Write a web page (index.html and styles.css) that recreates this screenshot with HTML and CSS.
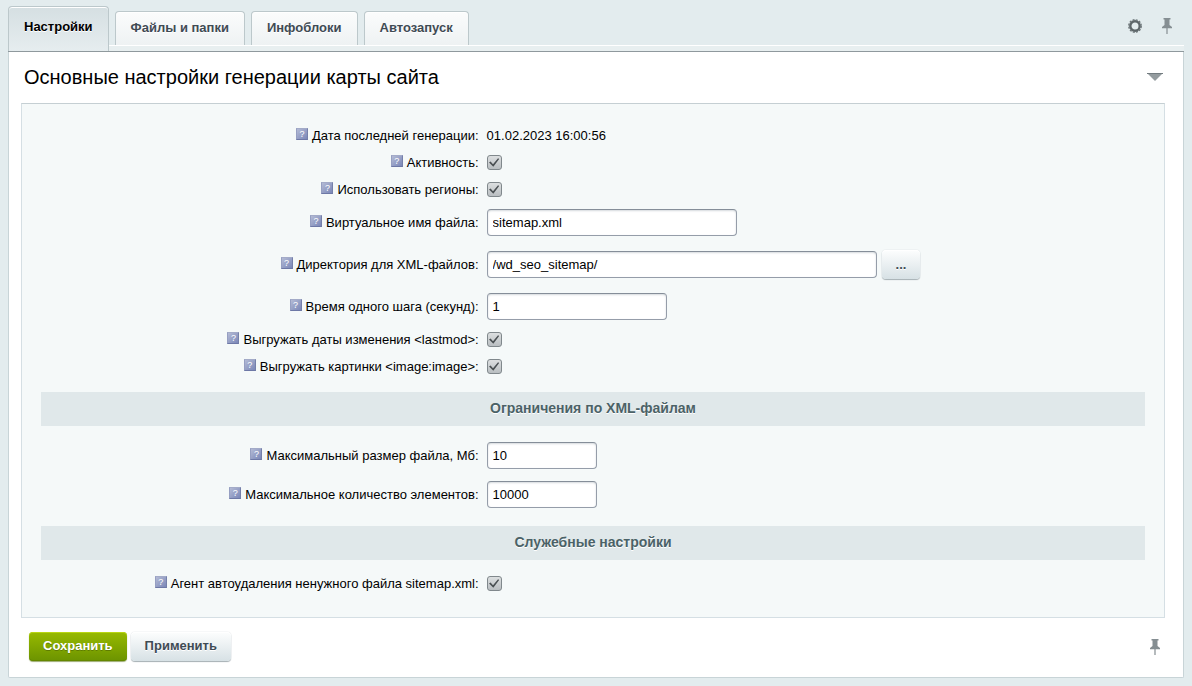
FILE: index.html
```html
<!DOCTYPE html>
<html lang="ru">
<head>
<meta charset="utf-8">
<title>Настройки карты сайта</title>
<link rel="stylesheet" href="styles.css">
</head>
<body>
<svg class="sprite" aria-hidden="true">
  <symbol id="pin" viewBox="0 0 10 16">
    <path d="M1.5 0h7v1.6H7.5V7L10 9v1.3H5.6V16H4.4v-5.7H0V9l2.5-2V1.6h-1z"/>
  </symbol>
</svg>
<main class="editor">
  <div class="tabs">
    <button class="tab tab-active" type="button">Настройки</button>
    <button class="tab" type="button">Файлы и папки</button>
    <button class="tab" type="button">Инфоблоки</button>
    <button class="tab" type="button">Автозапуск</button>
    <div class="tools">
      <button class="icon-button" type="button" aria-label="Параметры">
        <svg width="14" height="14" viewBox="0 0 14 14"><circle cx="7" cy="7" r="4.7" fill="none" stroke="#5d6669" stroke-width="2.4"/><circle cx="7" cy="7" r="6.2" fill="none" stroke="#6b7477" stroke-width="1.4" stroke-dasharray="2 1.246"/></svg>
      </button>
      <button class="icon-button" type="button" aria-label="Закрепить"><svg class="pin" width="10" height="16"><use href="#pin"/></svg></button>
    </div>
  </div>
  <form class="sheet">
    <div class="title-row">
      <h1 class="title">Основные настройки генерации карты сайта</h1>
      <button class="icon-button" type="button" aria-label="Свернуть"><svg width="16" height="8" viewBox="0 0 16 8"><path d="M0 0h16L8 8z" fill="#949c9f"/><path d="M0 .5h16" stroke="#737c80"/></svg></button>
    </div>
    <div class="panel">
      <div class="row"><div class="label"><span class="hint">?</span><span>Дата последней генерации:</span></div><div class="value">01.02.2023 16:00:56</div></div>
      <div class="row"><div class="label"><span class="hint">?</span><label for="active">Активность:</label></div><div class="value"><input class="check" id="active" type="checkbox" checked></div></div>
      <div class="row"><div class="label"><span class="hint">?</span><label for="regions">Использовать регионы:</label></div><div class="value"><input class="check" id="regions" type="checkbox" checked></div></div>
      <div class="row row-field"><div class="label"><span class="hint">?</span><label for="name">Виртуальное имя файла:</label></div><div class="value"><input class="field field-name" id="name" type="text" value="sitemap.xml"></div></div>
      <div class="row row-browse"><div class="label"><span class="hint">?</span><label for="dir">Директория для XML-файлов:</label></div><div class="value"><input class="field field-dir" id="dir" type="text" value="/wd_seo_sitemap/"><button class="button button-browse" type="button">...</button></div></div>
      <div class="row row-field"><div class="label"><span class="hint">?</span><label for="step">Время одного шага (секунд):</label></div><div class="value"><input class="field field-step" id="step" type="text" value="1"></div></div>
      <div class="row"><div class="label"><span class="hint">?</span><label for="lastmod">Выгружать даты изменения &lt;lastmod&gt;:</label></div><div class="value"><input class="check" id="lastmod" type="checkbox" checked></div></div>
      <div class="row"><div class="label"><span class="hint">?</span><label for="image">Выгружать картинки &lt;image:image&gt;:</label></div><div class="value"><input class="check" id="image" type="checkbox" checked></div></div>
      <h2 class="section">Ограничения по XML-файлам</h2>
      <div class="row row-field"><div class="label"><span class="hint">?</span><label for="size">Максимальный размер файла, Мб:</label></div><div class="value"><input class="field field-number" id="size" type="text" value="10"></div></div>
      <div class="row row-field"><div class="label"><span class="hint">?</span><label for="count">Максимальное количество элементов:</label></div><div class="value"><input class="field field-number" id="count" type="text" value="10000"></div></div>
      <h2 class="section">Служебные настройки</h2>
      <div class="row"><div class="label"><span class="hint">?</span><label for="agent">Агент автоудаления ненужного файла sitemap.xml:</label></div><div class="value"><input class="check" id="agent" type="checkbox" checked></div></div>
    </div>
    <div class="actions">
      <button class="button button-save" type="submit">Сохранить</button>
      <button class="button" type="button">Применить</button>
      <button class="icon-button actions-pin" type="button" aria-label="Закрепить"><svg class="pin" width="10" height="16"><use href="#pin"/></svg></button>
    </div>
  </form>
</main>
</body>
</html>
```
FILE: styles.css
```css
* { box-sizing: border-box; }
body {
  margin: 0;
  padding: 6px 8px 8px;
  background: #e3ecee;
  color: #000;
  font: 13px/16px "Liberation Sans", Arial, sans-serif;
}
button, input { font: inherit; margin: 0; }
.sprite { display: none; }
.tabs {
  display: flex;
  align-items: flex-start;
  height: 46px;
  border-bottom: 1px solid #8f999d;
  background: linear-gradient(#fff, #fff) 0 39px / 100% 1px no-repeat, linear-gradient(#e8eff0, #e8eff0) 0 40px / 100% 5px no-repeat;
}
.tab {
  height: 34px;
  margin: 5px 6px 0 0;
  padding: 0 15px 2px;
  border: 1px solid #bcc8cb;
  border-bottom: 0;
  border-radius: 4px 4px 0 0;
  background: linear-gradient(#fbfcfc, #eef2f3);
  box-shadow: inset 0 1px #fff;
  color: #3f4b54;
  font-weight: bold;
  text-shadow: 0 1px #fff;
}
.tab-active {
  height: 45px;
  margin-top: 0;
  padding-bottom: 4px;
  background: linear-gradient(#d5dfe2, #e6edef);
  color: #000;
}
.tools {
  display: flex;
  align-items: center;
  gap: 20px;
  height: 39px;
  margin-left: auto;
  padding-right: 12px;
}
.icon-button {
  display: flex;
  padding: 0;
  border: 0;
  background: none;
}
.pin { fill: #858e92; }
.sheet {
  border: 1px solid #c8d4d7;
  border-top: 0;
  background: #fff;
  padding: 0 18px 0 12px;
  border-radius: 0 0 2px 2px;
}
.title-row {
  display: flex;
  align-items: center;
  justify-content: space-between;
  height: 51px;
  padding: 0 2px 1px 3px;
}
.title { margin: 0; font-size: 20px; line-height: 24px; font-weight: normal; }
.panel {
  padding: 18px 19px 20px;
  border: 1px solid #d5dfe4;
  border-top-color: #c5cfd3;
  background: #f5f9f9;
}
.row {
  display: grid;
  grid-template-columns: 2fr 3fr;
  align-items: center;
  height: 27px;
}
.row-field { height: 39px; }
.row-browse { height: 45px; }
.label {
  display: flex;
  justify-content: flex-end;
  gap: 4px;
  padding-right: 4px;
}
.value { display: flex; align-items: center; gap: 5px; padding-left: 4px; }
.hint {
  width: 12px;
  height: 12px;
  border: 1px solid #8690b8;
  border-color: #a3abc8 #7580aa #6d78a6 #969fc2;
  background: linear-gradient(135deg, #b4bbd5, #7a87b8);
  color: #fff;
  font-size: 9px;
  line-height: 10px;
  text-align: center;
}
.check {
  appearance: none;
  width: 15px;
  height: 15px;
  border: 1px solid #80888c;
  border-radius: 3px;
  background: linear-gradient(#dcdfe0, #b9bec1);
  display: grid;
  place-items: center;
}
.check:checked::before {
  content: "";
  width: 11px;
  height: 9px;
  background: #4a5053;
  clip-path: polygon(4% 50%, 18% 40%, 40% 70%, 86% 4%, 96% 12%, 43% 98%);
}
.field {
  height: 27px;
  min-width: 0;
  padding: 0 5px;
  border: 1px solid #959da9;
  border-top-color: #858e99;
  border-radius: 4px;
  background: #fff;
  box-shadow: inset 0 1px 2px #d5dadd;
  color: #000;
}
.field-name { width: 250px; }
.field-dir { width: 390px; }
.field-step { width: 180px; }
.field-number { width: 110px; }
.section {
  margin: 12px 0 10px;
  padding-bottom: 2px;
  background: #e0e8ea;
  color: #4b6267;
  font-size: 14px;
  line-height: 32px;
  font-weight: bold;
  text-align: center;
  text-shadow: 0 1px #fff;
}
.button {
  height: 29px;
  padding: 0 14px 2px;
  border: 0;
  border-radius: 4px;
  background: linear-gradient(#fdfefe, #d7e1e5);
  box-shadow: 0 0 1px #b0bbc0, 0 1px 1px #a5afb3, inset 0 1px #fff;
  color: #3f4b54;
  font-weight: bold;
  text-shadow: 0 1px #fff;
}
.button-browse { padding-bottom: 0; }
.button-save {
  background: linear-gradient(#97ba00, #6c9300);
  box-shadow: 0 1px 1px #9cab72, inset 0 1px #b9d613, inset 0 -1px #648600;
  color: #fff;
  text-shadow: 0 1px #5f7d00;
}
.actions {
  display: flex;
  align-items: center;
  gap: 4px;
  height: 59px;
  padding: 0 5px 2px 8px;
}
.actions-pin { margin-left: auto; }
```
